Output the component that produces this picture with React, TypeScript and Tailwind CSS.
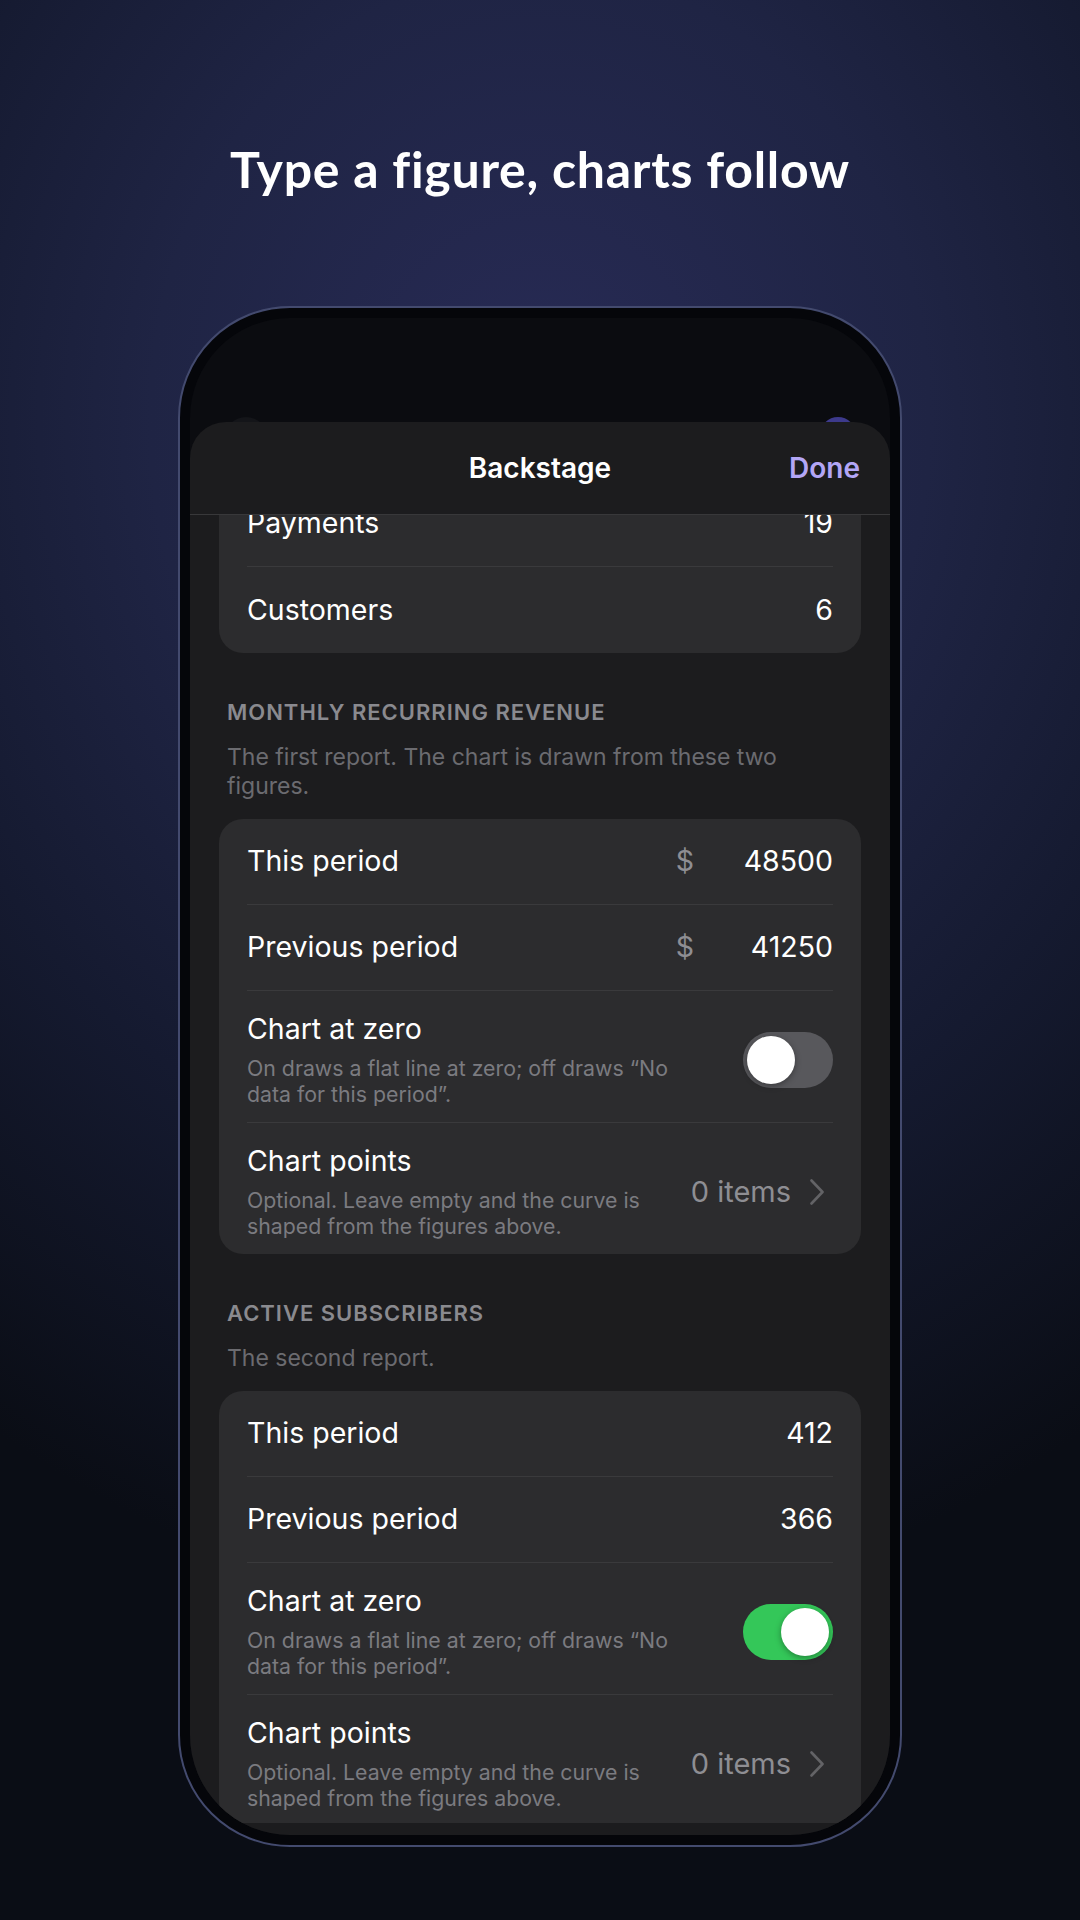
import React from "react";

const ui = { fontFamily: "Inter, 'Noto Sans', sans-serif" };

function Chevron() {
	return (
		<svg width="16" height="26" viewBox="0 0 16 26" fill="none">
			<path d="M2.5 1.5 L13.5 13 L2.5 24.5" stroke="#636366" strokeWidth="2.6" strokeLinecap="round" strokeLinejoin="round" />
		</svg>
	);
}

function Toggle({ on }: { on: boolean }) {
	return (
		<div
			className={
				on
					? "w-[90px] h-[56px] rounded-full bg-[#34c759] p-[4px] flex justify-end shrink-0"
					: "w-[90px] h-[56px] rounded-full bg-[#58585c] p-[4px] flex justify-start shrink-0"
			}
		>
			<div className="w-[48px] h-[48px] rounded-full bg-white shadow-[0_2px_6px_rgba(0,0,0,0.35)]" />
		</div>
	);
}

function Row({ label, value, currency, last }: { label: string; value: string; currency?: boolean; last?: boolean }) {
	return (
		<div className={last ? "h-[86px] flex items-center justify-between" : "h-[86px] flex items-center justify-between border-b border-[#3a3a3c]"}>
			<span className="text-[28.5px] text-white">{label}</span>
			{currency ? (
				<div className="flex items-center">
					<span className="text-[28.5px] text-[#8e8e93]">$</span>
					<span className="w-[139px] text-right text-[28.5px] text-white">{value}</span>
				</div>
			) : (
				<span className="text-[28.5px] text-white">{value}</span>
			)}
		</div>
	);
}

function ZeroRow({ on }: { on: boolean }) {
	return (
		<div className="pt-[21px] pb-[15px] flex items-center justify-between border-b border-[#3a3a3c]">
			<div className="w-[434px]">
				<div className="text-[28.5px] leading-[34px] text-white">Chart at zero</div>
				<div className="mt-[9px] text-[21.3px] leading-[26px] text-[#7b7b80]">
					On draws a flat line at zero; off draws “No data for this period”.
				</div>
			</div>
			<Toggle on={on} />
		</div>
	);
}

function PointsRow() {
	return (
		<div className="pt-[21px] pb-[15px] flex items-center justify-between">
			<div className="w-[434px] shrink-0">
				<div className="text-[28.5px] leading-[34px] text-white">Chart points</div>
				<div className="mt-[9px] text-[21.3px] leading-[26px] text-[#7b7b80]">
					Optional. Leave empty and the curve is shaped from the figures above.
				</div>
			</div>
			<div className="flex items-center gap-[18px] pr-[8px] whitespace-nowrap">
				<span className="text-[29px] text-[#8e8e93]">0 items</span>
				<Chevron />
			</div>
		</div>
	);
}

function Section({ title, note }: { title: string; note: string }) {
	return (
		<div className="px-[8px]">
			<div className="mt-[45px] text-[22px] leading-[28px] font-semibold tracking-[0.045em] text-[#8a8a8f] uppercase">{title}</div>
			<div className="mt-[17px] mb-[18px] text-[23px] leading-[29px] text-[#6b6b70]">{note}</div>
		</div>
	);
}

export default function App() {
	return (
		<div
			className="w-[1080px] h-[1920px] overflow-hidden flex flex-col items-center bg-[radial-gradient(ellipse_95%_62%_at_50%_22%,#282b56_0%,#1f2444_38%,#151a30_65%,#0a0d15_100%)]"
			style={ui}
		>
			<h1
				className="pt-[140px] text-[50px] leading-[58px] font-bold tracking-[0.015em] text-white"
				style={{ fontFamily: "Lato, 'Open Sans', sans-serif" }}
			>
				Type a figure, charts follow
			</h1>

			{/* phone */}
			<div className="mt-[108px] w-[724px] h-[1541px] rounded-[112px] border-2 border-[#434a6e] bg-[#05060a] p-[10px]">
				<div className="h-full rounded-[100px] overflow-hidden bg-[#0b0c10] flex flex-col">
					{/* nav behind the sheet */}
					<div className="h-[143px] shrink-0 flex items-end justify-between px-[34px]">
						<div className="w-[44px] h-[44px] rounded-full bg-[#141519]" />
						<div className="w-[36px] h-[44px] rounded-full bg-[#3d3a8c]" />
					</div>

					{/* sheet */}
					<div className="relative -mt-[39px] flex-1 min-h-0 bg-[#1c1c1e] rounded-t-[36px] flex flex-col pb-[12px]">
						<div className="relative h-[93px] shrink-0 flex items-center justify-center border-b border-[#38383a]">
							<span className="text-[28px] font-semibold text-white">Backstage</span>
							<span className="absolute right-[30px] text-[28px] font-semibold text-[#b3a6f6]">Done</span>
						</div>

						<div className="flex-1 min-h-0 overflow-hidden px-[29px]">
							<div className="-mt-[34px] bg-[#2c2c2e] rounded-[24px] px-[28px]">
								<Row label="Payments" value="19" />
								<Row label="Customers" value="6" last />
							</div>

							<Section title="Monthly recurring revenue" note="The first report. The chart is drawn from these two figures." />
							<div className="bg-[#2c2c2e] rounded-[24px] px-[28px]">
								<Row label="This period" value="48500" currency />
								<Row label="Previous period" value="41250" currency />
								<ZeroRow on={false} />
								<PointsRow />
							</div>

							<Section title="Active subscribers" note="The second report." />
							<div className="bg-[#2c2c2e] rounded-[24px] px-[28px]">
								<Row label="This period" value="412" />
								<Row label="Previous period" value="366" />
								<ZeroRow on={true} />
								<PointsRow />
							</div>
						</div>
					</div>
				</div>
			</div>
		</div>
	);
}
